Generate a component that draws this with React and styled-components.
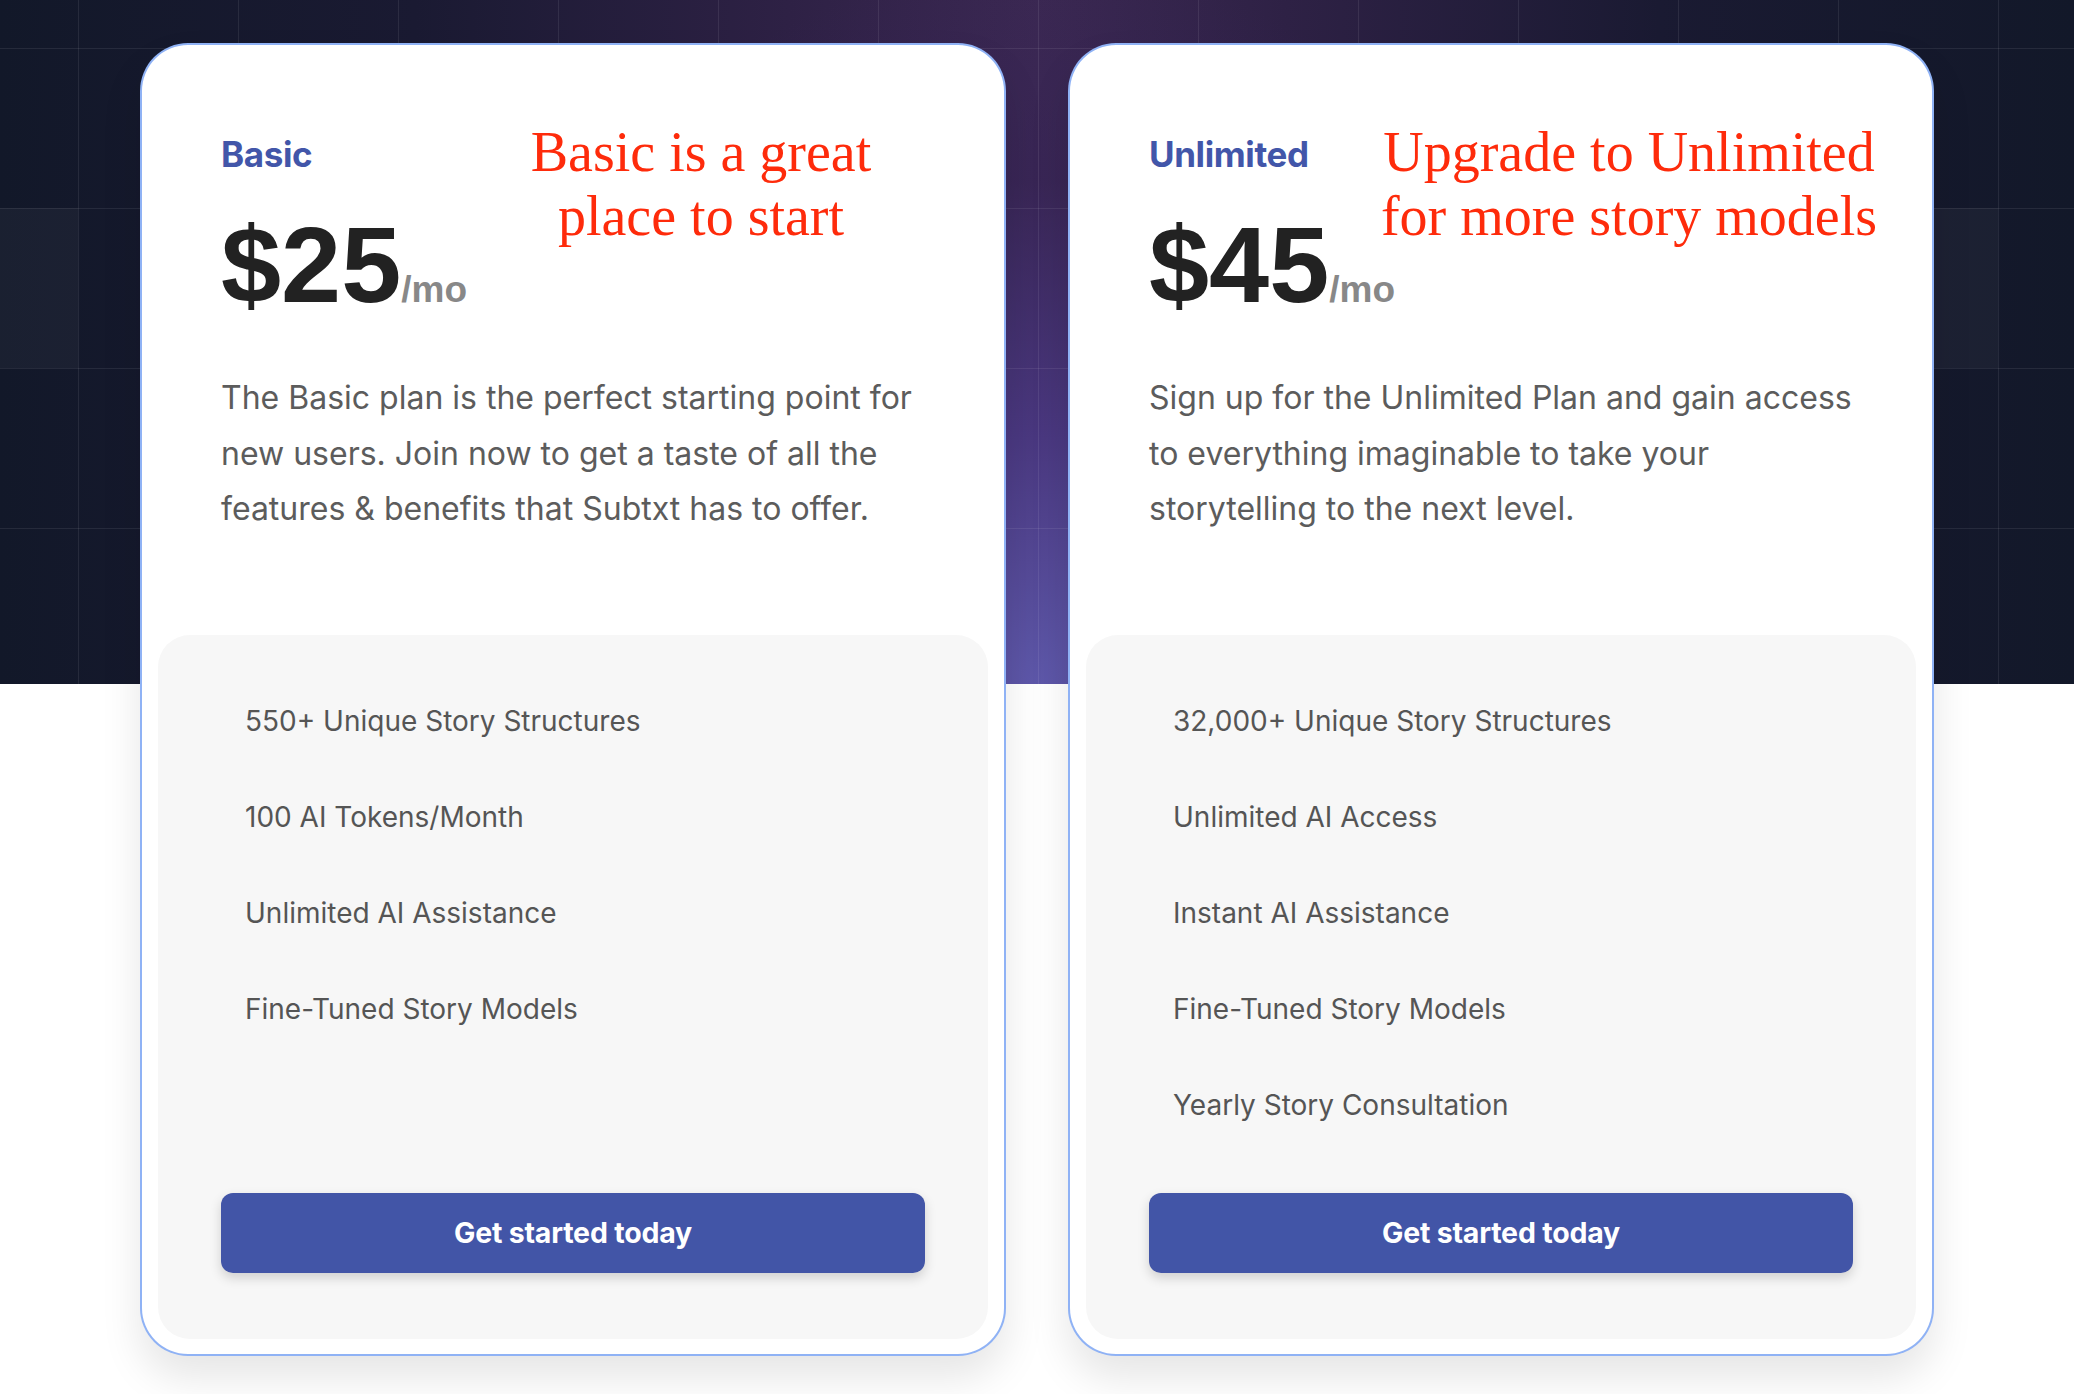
import React from "react";
import styled, { createGlobalStyle } from "styled-components";

const GlobalStyle = createGlobalStyle`
  html, body {
    margin: 0;
    padding: 0;
    background: #ffffff;
  }
  body {
    font-family: "Inter", "Noto Sans", sans-serif;
    -webkit-font-smoothing: antialiased;
  }
`;

const plans = [
  {
    name: "Basic",
    price: "$25",
    note: ["Basic is a great", "place to start"],
    description:
      "The Basic plan is the perfect starting point for new users. Join now to get a taste of all the features & benefits that Subtxt has to offer.",
    features: [
      "550+ Unique Story Structures",
      "100 AI Tokens/Month",
      "Unlimited AI Assistance",
      "Fine-Tuned Story Models",
    ],
  },
  {
    name: "Unlimited",
    price: "$45",
    note: ["Upgrade to Unlimited", "for more story models"],
    description:
      "Sign up for the Unlimited Plan and gain access to everything imaginable to take your storytelling to the next level.",
    features: [
      "32,000+ Unique Story Structures",
      "Unlimited AI Access",
      "Instant AI Assistance",
      "Fine-Tuned Story Models",
      "Yearly Story Consultation",
    ],
  },
];

const Page = styled.div`
  position: relative;
  min-height: 100vh;
  overflow: hidden;

  /* dark hero backdrop with grid */
  &::before {
    content: "";
    position: absolute;
    left: 0;
    right: 0;
    top: 0;
    height: 684px;
    background-color: #121829;
    background-image:
      linear-gradient(to right, rgba(255, 255, 255, 0.08) 1.5px, transparent 1.5px),
      linear-gradient(to bottom, rgba(255, 255, 255, 0.08) 1.5px, transparent 1.5px),
      linear-gradient(rgba(255, 255, 255, 0.035), rgba(255, 255, 255, 0.035)),
      linear-gradient(rgba(255, 255, 255, 0.035), rgba(255, 255, 255, 0.035)),
      radial-gradient(ellipse 620px 720px at 50% 100%, rgba(94, 88, 170, 1) 0%, rgba(76, 58, 135, 0.85) 35%, rgba(55, 36, 88, 0.55) 70%, rgba(40, 28, 64, 0) 100%),
      linear-gradient(to right, #121829 0%, #1a1a32 20%, #2e2145 38%, #3b2852 50%, #2e2145 62%, #1a1a32 80%, #121829 100%);
    background-size: 160px 160px, 160px 160px, 160px 160px, 160px 160px, 100% 100%, 100% 100%;
    background-position: 78px 48px, 78px 48px, -82px 208px, 1838px 208px, 0 0, 0 0;
    background-repeat: repeat, repeat, no-repeat, no-repeat, no-repeat, no-repeat;
  }
`;

const CardRow = styled.div`
  position: relative;
  z-index: 1;
  display: grid;
  grid-template-columns: repeat(2, 866px);
  justify-content: center;
  gap: 62px;
  padding-top: 43px;
  padding-bottom: 40px;
`;

const Card = styled.div`
  position: relative;
  box-sizing: border-box;
  display: flex;
  flex-direction: column;
  background: #ffffff;
  border: 2px solid rgba(74, 130, 239, 0.62);
  border-radius: 48px;
  padding: 87px 16px 15px 16px;
  box-shadow: 0 22px 40px rgba(0, 0, 0, 0.1);
`;

const Header = styled.div`
  padding: 0 44px 0 63px;
  margin-bottom: 98px;
`;

const PlanName = styled.div`
  font-family: "Inter", sans-serif;
  font-weight: 700;
  font-size: 35px;
  line-height: 44px;
  color: #4256a9;
  letter-spacing: -0.4px;
`;

const Price = styled.div`
  margin-top: 38px;
  font-family: "Liberation Sans", Arial, sans-serif;
  font-weight: 700;
  font-size: 108px;
  line-height: 102px;
  color: #222222;
  white-space: nowrap;
`;

const Per = styled.span`
  font-size: 37px;
  color: #888888;
`;

const Description = styled.p`
  margin: 29px 0 0;
  font-family: "Inter", sans-serif;
  font-size: 32px;
  line-height: 55.5px;
  color: #5c5c5c;
`;

const Note = styled.div`
  position: absolute;
  left: 559px;
  top: 75px;
  transform: translateX(-50%);
  font-family: "Liberation Serif", "Times New Roman", serif;
  font-size: 56px;
  line-height: 64px;
  color: #fe2b0b;
  text-align: center;
  white-space: nowrap;
`;

const Panel = styled.div`
  flex: 1;
  display: flex;
  flex-direction: column;
  background: #f7f7f7;
  border-radius: 32px;
  padding: 66px 63px 66px;
`;

const FeatureList = styled.ul`
  list-style: none;
  margin: 0 0 68px;
  padding: 0 0 0 24px;
  display: flex;
  flex-direction: column;
  gap: 56px;
`;

const Feature = styled.li`
  font-family: "Inter", sans-serif;
  font-size: 28px;
  line-height: 40px;
  color: #555555;
`;

const Button = styled.button`
  margin-top: auto;
  height: 80px;
  width: 100%;
  border: none;
  border-radius: 12px;
  background: #4255a7;
  color: #ffffff;
  font-family: "Inter", sans-serif;
  font-weight: 700;
  font-size: 28.5px;
  letter-spacing: -0.2px;
  box-shadow: 0 5px 12px rgba(0, 0, 0, 0.16);
  cursor: pointer;
`;

const PlanCard = ({ plan }) => (
  <Card>
    <Header>
      <PlanName>{plan.name}</PlanName>
      <Price>
        {plan.price}
        <Per>/mo</Per>
      </Price>
      <Description>{plan.description}</Description>
    </Header>
    <Note>
      {plan.note[0]}
      <br />
      {plan.note[1]}
    </Note>
    <Panel>
      <FeatureList>
        {plan.features.map((f) => (
          <Feature key={f}>{f}</Feature>
        ))}
      </FeatureList>
      <Button>Get started today</Button>
    </Panel>
  </Card>
);

const App = () => {
  return (
    <Page>
      <GlobalStyle />
      <CardRow>
        {plans.map((p) => (
          <PlanCard key={p.name} plan={p} />
        ))}
      </CardRow>
    </Page>
  );
};

export default App;
